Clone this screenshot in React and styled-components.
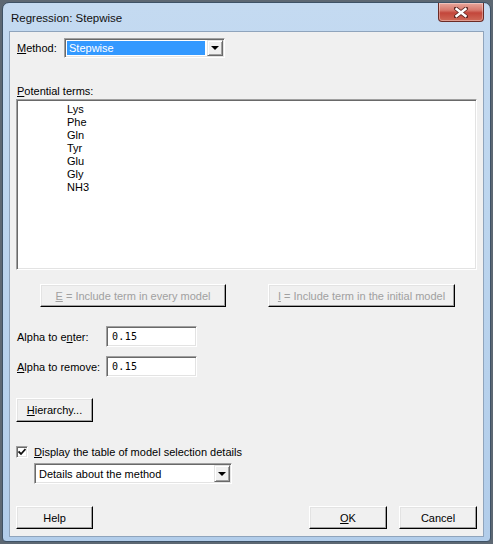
import React from "react";
import styled, { createGlobalStyle } from "styled-components";

const GlobalStyle = createGlobalStyle`
  html, body {
    margin: 0;
    padding: 0;
    background: #5d6873;
    width: 493px;
    height: 544px;
    overflow: hidden;
  }
  * { box-sizing: border-box; }
`;

const Window = styled.div`
  margin: 2px 0 0 2px;
  width: 489px;
  height: 540px;
  border: 1px solid #3e5266;
  border-radius: 7px 7px 4px 4px;
  background: linear-gradient(180deg, #c4daf1 0%, #bcd5ee 40%, #b2cdea 100%);
  padding: 0 6px 4px 6px;
  display: flex;
  flex-direction: column;
  font-family: "Liberation Sans", Arial, sans-serif;
  font-size: 11px;
  color: #000;
`;

const TitleBar = styled.div`
  height: 28px;
  display: flex;
  align-items: flex-start;
  justify-content: space-between;
  padding: 0 0 0 2px;
`;

const Title = styled.div`
  font-size: 11.5px;
  margin-top: 9px;
  color: #111;
`;

const CloseButton = styled.div`
  width: 46px;
  height: 19px;
  border: 1px solid #6b2b26;
  border-top: none;
  border-radius: 0 0 4px 4px;
  background: linear-gradient(180deg, #e8a79c 0%, #d7786c 40%, #c3463b 55%, #cf6a58 100%);
  display: flex;
  align-items: center;
  justify-content: center;
  box-shadow: inset 0 0 0 1px rgba(255, 255, 255, 0.35);
`;

const Client = styled.div`
  flex: 1;
  border: 1px solid #8fa4bc;
  background: #f0f0f0;
  padding: 0 0 0 6px;
  display: flex;
  flex-direction: column;
`;

const Row = styled.div`
  display: flex;
  align-items: center;
  height: ${(p) => p.$h || 20}px;
  margin-top: ${(p) => p.$mt || 0}px;
`;

const Label = styled.div`
  width: ${(p) => p.$w}px;
  padding-left: 1px;
  white-space: nowrap;
`;

const U = styled.span`
  text-decoration: underline;
`;

const Combo = styled.div`
  width: ${(p) => p.$w}px;
  height: ${(p) => p.$h}px;
  margin-left: ${(p) => p.$ml || 0}px;
  background: #fff;
  border-top: 1px solid #a0a0a0;
  border-left: 1px solid #a0a0a0;
  border-right: 1px solid #fff;
  border-bottom: 1px solid #fff;
  box-shadow: inset 1px 1px 0 #696969, inset -1px -1px 0 #e3e3e3;
  padding: 2px 2px 2px 2px;
  display: flex;
  align-items: stretch;
`;

const ComboText = styled.div`
  flex: 1;
  display: flex;
  align-items: center;
  padding-left: 2px;
  margin-right: 2px;
  background: ${(p) => (p.$selected ? "#3399ff" : "transparent")};
  color: ${(p) => (p.$selected ? "#fff" : "#000")};
  font-size: 11px;
`;

const ComboButton = styled.div`
  width: 16px;
  background: #f0f0f0;
  border-top: 1px solid #e3e3e3;
  border-left: 1px solid #e3e3e3;
  border-right: 1px solid #696969;
  border-bottom: 1px solid #696969;
  box-shadow: inset 1px 1px 0 #fff, inset -1px -1px 0 #a0a0a0;
  display: flex;
  align-items: center;
  justify-content: center;
  margin: -1px -1px -1px 0;
`;

const Arrow = styled.div`
  width: 0;
  height: 0;
  border-left: 4px solid transparent;
  border-right: 4px solid transparent;
  border-top: 4px solid #000;
`;

const SectionLabel = styled.div`
  height: 13px;
  line-height: 13px;
  margin-top: ${(p) => p.$mt}px;
  padding-left: 1px;
`;

const ListBox = styled.div`
  width: 461px;
  height: 171px;
  margin-top: 1px;
  background: #fff;
  border-top: 1px solid #a0a0a0;
  border-left: 1px solid #a0a0a0;
  border-right: 1px solid #fff;
  border-bottom: 1px solid #fff;
  box-shadow: inset 1px 1px 0 #696969, inset -1px -1px 0 #e3e3e3;
  padding: 3px 0 0 50px;
`;

const ListItem = styled.div`
  height: 13px;
  line-height: 13px;
`;

const Button = styled.div`
  width: ${(p) => p.$w}px;
  height: ${(p) => p.$h || 23}px;
  margin-left: ${(p) => p.$ml || 0}px;
  background: #f0f0f0;
  border-top: 1px solid #fff;
  border-left: 1px solid #fff;
  border-right: 1px solid #000;
  border-bottom: 1px solid #000;
  box-shadow: inset -1px -1px 0 #a0a0a0, inset 1px 1px 0 #e3e3e3;
  display: flex;
  align-items: center;
  justify-content: center;
  color: ${(p) => (p.$disabled ? "#a0a0a0" : "#000")};
  white-space: nowrap;
`;

const TextField = styled.div`
  width: 91px;
  height: 21px;
  background: #fff;
  border-top: 1px solid #a0a0a0;
  border-left: 1px solid #a0a0a0;
  border-right: 1px solid #fff;
  border-bottom: 1px solid #fff;
  box-shadow: inset 1px 1px 0 #696969, inset -1px -1px 0 #e3e3e3;
  display: flex;
  align-items: center;
  padding-left: 5px;
  font-family: "DejaVu Sans Mono", "Liberation Mono", monospace;
  font-size: 10px;
  letter-spacing: 0.3px;
`;

const CheckBox = styled.div`
  width: 12px;
  height: 12px;
  background: #fff;
  border-top: 1px solid #a0a0a0;
  border-left: 1px solid #a0a0a0;
  border-right: 1px solid #fff;
  border-bottom: 1px solid #fff;
  box-shadow: inset 1px 1px 0 #696969, inset -1px -1px 0 #e3e3e3;
  display: flex;
  align-items: center;
  justify-content: center;
`;

const CheckLabel = styled.div`
  margin-left: 6px;
  white-space: nowrap;
`;

const Spacer = styled.div`
  flex: 1;
`;

const EndGap = styled.div`
  width: 6px;
`;

const terms = ["Lys", "Phe", "Gln", "Tyr", "Glu", "Gly", "NH3"];

export default function App() {
  return (
    <>
      <GlobalStyle />
      <Window>
        <TitleBar>
          <Title>Regression: Stepwise</Title>
          <CloseButton>
            <svg width="14" height="11" viewBox="0 0 14 11">
              <path
                d="M2 1.5 L12 9.5 M12 1.5 L2 9.5"
                stroke="#5a2420"
                strokeWidth="4"
                strokeLinecap="square"
              />
              <path
                d="M2.5 2 L11.5 9 M11.5 2 L2.5 9"
                stroke="#fff"
                strokeWidth="2.4"
                strokeLinecap="square"
              />
            </svg>
          </CloseButton>
        </TitleBar>
        <Client>
          <Row $mt={6} $h={20}>
            <Label $w={48}>
              <U>M</U>ethod:
            </Label>
            <Combo $w={161} $h={20}>
              <ComboText $selected>Stepwise</ComboText>
              <ComboButton>
                <Arrow />
              </ComboButton>
            </Combo>
          </Row>

          <SectionLabel $mt={27}>
            <U>P</U>otential terms:
          </SectionLabel>
          <ListBox>
            {terms.map((t) => (
              <ListItem key={t}>{t}</ListItem>
            ))}
          </ListBox>

          <Row $mt={14} $h={23}>
            <Button $w={186} $ml={24} $disabled>
              <U>E</U>&nbsp;= Include term in every model
            </Button>
            <Button $w={187} $ml={42} $disabled>
              <U>I</U>&nbsp;= Include term in the initial model
            </Button>
          </Row>

          <Row $mt={19} $h={21}>
            <Label $w={90}>
              Alpha to e<U>n</U>ter:
            </Label>
            <TextField>0.15</TextField>
          </Row>
          <Row $mt={9} $h={21}>
            <Label $w={90}>
              <U>A</U>lpha to remove:
            </Label>
            <TextField>0.15</TextField>
          </Row>

          <Row $mt={21} $h={24}>
            <Button $w={77} $h={24}>
              <U>H</U>ierarchy...
            </Button>
          </Row>

          <Row $mt={23} $h={13}>
            <CheckBox>
              <svg width="8" height="8" viewBox="0 0 8 8">
                <path d="M0.5 3.5 L3 6 L7.5 1" stroke="#111" strokeWidth="1.8" fill="none" />
              </svg>
            </CheckBox>
            <CheckLabel>
              <U>D</U>isplay the table of model selection details
            </CheckLabel>
          </Row>
          <Row $mt={5} $h={21}>
            <Combo $w={198} $h={21} $ml={18}>
              <ComboText>Details about the method</ComboText>
              <ComboButton>
                <Arrow />
              </ComboButton>
            </Combo>
          </Row>

          <Row $mt={22} $h={23}>
            <Button $w={77}>Help</Button>
            <Spacer />
            <Button $w={78}>
              <U>O</U>K
            </Button>
            <Button $w={78} $ml={12}>
              Cancel
            </Button>
            <EndGap />
          </Row>
        </Client>
      </Window>
    </>
  );
}
